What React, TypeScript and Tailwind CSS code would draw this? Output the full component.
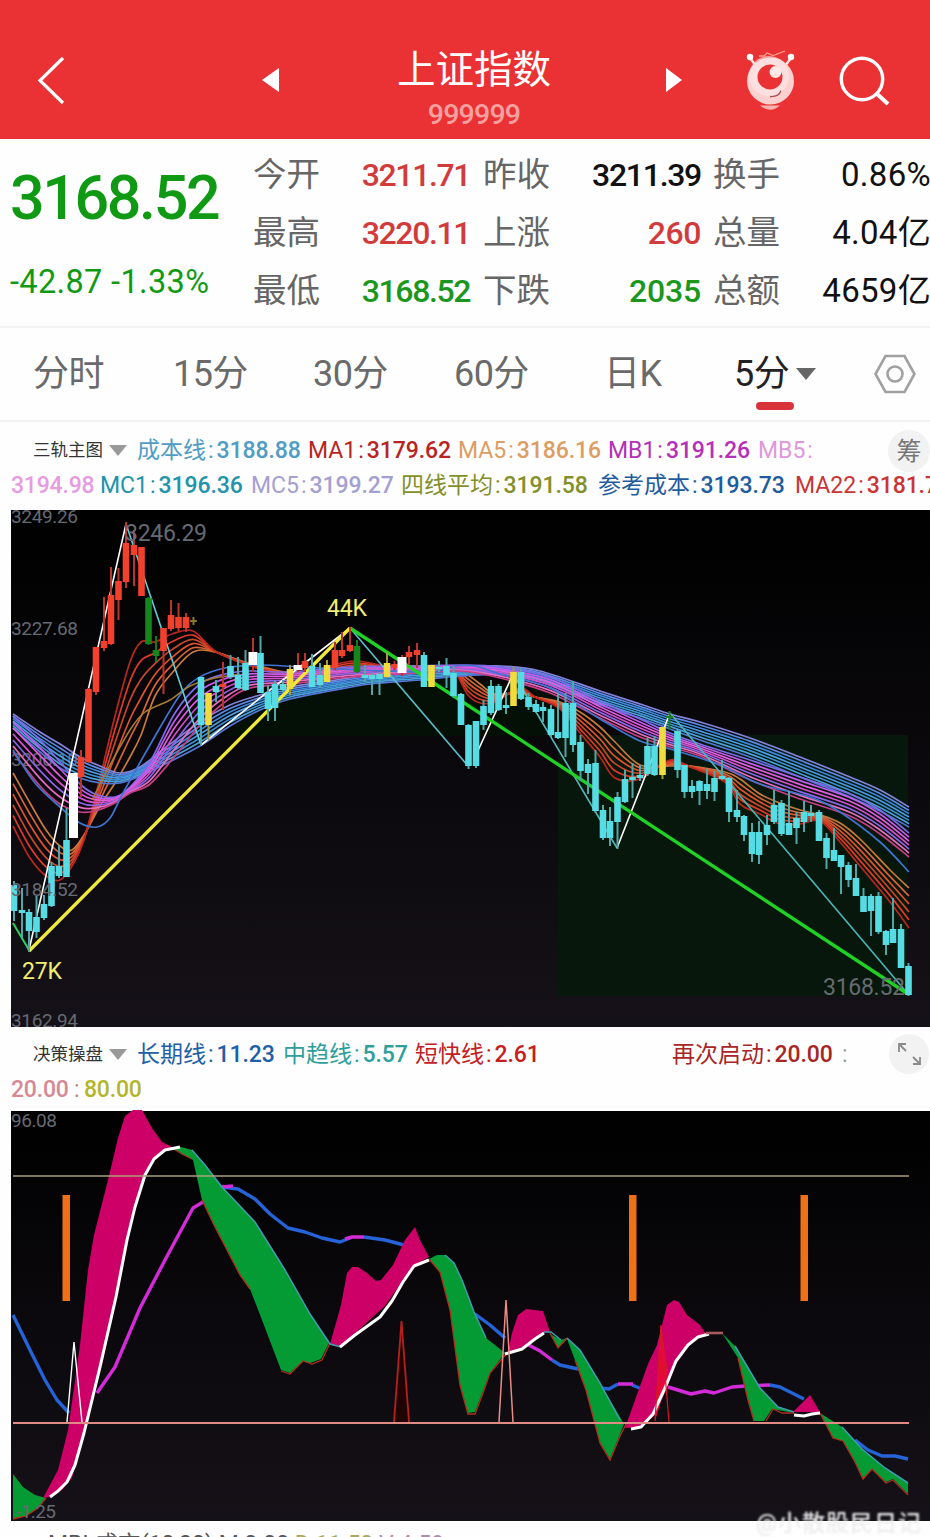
import React from "react";

type Pt = [number, number];
// x, high, low, body top, body bottom, kind
type Candle = [number, number, number, number, number, string];

const fills: Record<string, string> = {
  c: "#58dce4",
  r: "#f1402c",
  g: "#15861b",
  y: "#f0dc3c",
  w: "#ffffff",
  o: "#8a7a2c",
};
const wicks: Record<string, string> = {
  c: "#4fa8a8",
  r: "#b9342c",
  g: "#157a1d",
  y: "#a39a3a",
  w: "#b9342c",
  o: "#8a7a2c",
};

const candles: Candle[] = [
  [14, 881, 921, 885, 911, "c"],
  [22, 888, 938, 910, 913, "c"],
  [29, 909, 952, 912, 931, "c"],
  [36.5, 896, 938, 917, 932, "c"],
  [44, 895, 920, 904, 918, "c"],
  [51.5, 862, 907, 866, 906, "c"],
  [59, 845, 878, 866, 876, "c"],
  [66.5, 808, 877, 840, 877, "c"],
  [73.5, 773, 838, 773, 838, "w"],
  [81, 750, 797, 757, 777, "r"],
  [88.5, 688, 763, 689, 762, "r"],
  [96, 647, 695, 647, 692, "r"],
  [104, 597, 651, 641, 648, "r"],
  [111, 567, 645, 595, 644, "r"],
  [118.5, 568, 620, 581, 600, "r"],
  [126, 522, 588, 543, 582, "r"],
  [134, 530, 586, 545, 555, "r"],
  [141.5, 547, 596, 547, 596, "r"],
  [148.5, 597, 645, 598, 644, "g"],
  [156, 636, 662, 650, 656, "g"],
  [163.5, 628, 694, 628, 651, "r"],
  [171, 600, 631, 615, 629, "r"],
  [178.5, 603, 631, 617, 628, "r"],
  [186, 613, 632, 617, 628, "r"],
  [193.5, 617, 625, 620, 622, "o"],
  [201, 677, 745, 677, 725, "c"],
  [208.5, 693, 740, 693, 725, "y"],
  [216, 680, 702, 686, 692, "c"],
  [223, 662, 710, 684, 687, "r"],
  [230.5, 655, 679, 666, 677, "c"],
  [238, 657, 690, 675, 688, "c"],
  [245.5, 650, 691, 663, 690, "c"],
  [253, 638, 672, 652, 665, "w"],
  [260.5, 636, 693, 653, 693, "c"],
  [268, 685, 721, 692, 709, "c"],
  [275, 681, 721, 684, 708, "c"],
  [283, 680, 692, 684, 690, "c"],
  [290, 665, 695, 669, 689, "y"],
  [298, 653, 672, 665, 670, "w"],
  [305, 653, 672, 661, 668, "r"],
  [312, 654, 687, 666, 687, "c"],
  [320, 663, 688, 675, 685, "c"],
  [327, 660, 682, 665, 682, "y"],
  [335, 642, 670, 650, 668, "r"],
  [342, 632, 658, 650, 656, "r"],
  [350, 627, 652, 645, 651, "r"],
  [357, 640, 673, 646, 672, "g"],
  [365, 665, 682, 675, 678, "c"],
  [372, 673, 695, 675, 679, "c"],
  [379.5, 672, 695, 674, 679, "c"],
  [387, 652, 678, 663, 677, "y"],
  [394.5, 661, 670, 664, 668, "r"],
  [402, 655, 676, 657, 673, "w"],
  [409, 646, 665, 652, 657, "r"],
  [417, 643, 668, 650, 655, "r"],
  [424, 652, 687, 655, 687, "c"],
  [431.5, 665, 687, 665, 687, "y"],
  [439, 661, 672, 667, 669, "c"],
  [446.5, 658, 688, 666, 675, "c"],
  [453.5, 666, 698, 673, 696, "c"],
  [461, 693, 725, 694, 725, "c"],
  [468.5, 724, 769, 725, 766, "c"],
  [476, 721, 768, 721, 766, "c"],
  [483.5, 700, 730, 706, 725, "c"],
  [491, 680, 715, 686, 713, "c"],
  [498.5, 684, 711, 686, 710, "c"],
  [506, 692, 714, 705, 708, "c"],
  [513.5, 667, 706, 672, 706, "y"],
  [521, 668, 700, 672, 699, "c"],
  [528.5, 693, 710, 697, 707, "c"],
  [536, 700, 713, 704, 712, "c"],
  [543, 702, 722, 707, 711, "c"],
  [551, 705, 737, 709, 735, "c"],
  [558, 693, 739, 732, 738, "c"],
  [565.5, 693, 757, 703, 738, "c"],
  [573, 681, 752, 703, 745, "c"],
  [580.5, 735, 781, 742, 771, "c"],
  [588, 759, 794, 764, 773, "c"],
  [595.5, 750, 813, 763, 811, "c"],
  [603, 805, 840, 810, 838, "c"],
  [610, 807, 846, 821, 838, "c"],
  [617.5, 792, 849, 797, 822, "c"],
  [625, 770, 803, 779, 802, "c"],
  [632.5, 763, 798, 777, 780, "c"],
  [640, 765, 781, 775, 778, "c"],
  [647.5, 738, 776, 746, 774, "c"],
  [654.5, 736, 776, 746, 775, "c"],
  [662.5, 727, 779, 727, 775, "y"],
  [669.5, 711, 730, 716, 718, "g"],
  [677.5, 730, 778, 731, 770, "c"],
  [684.5, 765, 798, 765, 792, "c"],
  [692, 780, 798, 786, 792, "c"],
  [699.5, 780, 805, 781, 791, "c"],
  [707, 769, 799, 784, 791, "c"],
  [714.5, 771, 801, 778, 792, "c"],
  [722, 760, 780, 776, 779, "c"],
  [729, 777, 822, 778, 812, "c"],
  [737, 790, 822, 810, 817, "c"],
  [744, 815, 841, 816, 835, "c"],
  [752, 823, 862, 832, 854, "c"],
  [759, 821, 864, 832, 855, "c"],
  [767, 815, 845, 825, 835, "c"],
  [774, 790, 824, 805, 822, "c"],
  [781.5, 800, 836, 803, 834, "c"],
  [789, 791, 835, 823, 835, "c"],
  [796.5, 812, 844, 818, 828, "c"],
  [804, 801, 832, 812, 822, "c"],
  [811, 805, 822, 813, 816, "c"],
  [819, 810, 841, 812, 841, "c"],
  [826.5, 833, 869, 838, 858, "c"],
  [834, 828, 861, 850, 861, "c"],
  [841, 855, 894, 855, 867, "c"],
  [848.5, 862, 887, 865, 880, "c"],
  [856, 864, 896, 878, 896, "c"],
  [863.5, 888, 912, 896, 912, "c"],
  [871, 894, 936, 896, 911, "c"],
  [878.5, 892, 934, 896, 932, "c"],
  [886, 930, 955, 931, 945, "c"],
  [893, 898, 943, 929, 943, "c"],
  [901, 924, 968, 929, 968, "c"],
  [908.5, 963, 996, 966, 995, "c"],
];

// Each band: x, y of the slowest line, y of the fastest line
type Band = { rows: [number, number, number][]; colors: string[] };

const bands: Band[] = [
  {
    rows: [
      [13, 773, 826], [30, 803, 858], [46, 830, 876], [60, 846, 880], [72, 850, 866],
      [84, 835, 840], [100, 806, 778], [115, 783, 716], [130, 757, 662], [141, 735, 642],
      [155, 696, 642], [172, 673, 634], [193, 652, 631], [215, 652, 651], [245, 662, 664],
      [285, 672, 675], [320, 674, 669], [355, 671, 661], [400, 666, 669], [440, 667, 669],
      [455, 669, 673], [468, 675, 695], [480, 684, 703], [495, 694, 702], [520, 693, 688],
      [535, 697, 697], [560, 702, 709], [580, 712, 733], [600, 727, 757], [615, 742, 778],
      [640, 765, 779], [670, 766, 760], [690, 766, 767], [725, 772, 782], [740, 779, 804],
      [760, 794, 814], [780, 803, 824], [800, 810, 824], [820, 815, 821], [840, 823, 842],
      [860, 839, 866], [890, 870, 902], [909, 888, 928],
    ],
    colors: ["#c87a3c", "#d8643a", "#e0532e", "#c8482a", "#e23a28", "#b8281e"],
  },
  {
    rows: [
      [13, 714, 728], [40, 732, 752], [60, 744, 768], [80, 757, 778], [100, 766, 783],
      [120, 773, 783], [140, 767, 776], [165, 748, 764], [200, 722, 746], [230, 705, 726],
      [260, 695, 710], [290, 687, 699], [330, 681, 691], [370, 675, 684], [420, 670, 680],
      [460, 668, 676], [500, 666, 675], [540, 671, 682], [600, 691, 705], [640, 704, 718],
      [670, 714, 729], [700, 722, 740], [750, 738, 757], [800, 757, 777], [850, 777, 797],
      [880, 790, 811], [909, 807, 827],
    ],
    colors: ["#8483dc", "#5b8ae6", "#3a86d8", "#4a9be0", "#3b8fd0", "#4aa0d8", "#5577d8"],
  },
  {
    rows: [
      [13, 716, 752], [40, 740, 786], [60, 762, 804], [80, 784, 812], [95, 794, 811],
      [115, 797, 803], [130, 787, 793], [150, 762, 784], [175, 713, 756], [200, 684, 725],
      [225, 674, 702], [250, 671, 688], [290, 672, 684], [350, 667, 677], [420, 666, 673],
      [460, 665, 671], [500, 667, 678], [550, 677, 693], [600, 701, 718], [640, 719, 737],
      [670, 733, 747], [700, 744, 756], [750, 760, 780], [800, 777, 799], [850, 794, 816],
      [880, 810, 834], [909, 833, 857],
    ],
    colors: ["#7e6bea", "#c45aee", "#e05ce0", "#d44fd0", "#8b63e8", "#e86cc0", "#c83f88"],
  },
];

const smooth = (pts: Pt[]) => {
  let d = `M${pts[0][0]} ${pts[0][1]}`;
  for (let i = 0; i < pts.length - 1; i++) {
    const a = pts[i - 1] ?? pts[i];
    const b = pts[i];
    const c = pts[i + 1];
    const e = pts[i + 2] ?? c;
    d += `C${b[0] + (c[0] - a[0]) / 6} ${b[1] + (c[1] - a[1]) / 6} ${
      c[0] - (e[0] - b[0]) / 6
    } ${c[1] - (e[1] - b[1]) / 6} ${c[0]} ${c[1]}`;
  }
  return d;
};

const Header = () => (
  <header className="h-[139px] bg-[#ea3234] flex items-start overflow-hidden">
    <svg width="32" height="52" className="ml-[35px] mt-[54px]" fill="none">
      <path d="M28 4 L5 26.500 L28 49" stroke="#fff" strokeWidth="3.200" />
    </svg>
    <svg width="18" height="26" className="ml-[195px] mt-[67px]">
      <path d="M17 1 V25 L0 13 Z" fill="#fff" />
    </svg>
    <div className="ml-[94px] w-[200px] pt-[47px] flex flex-col items-center">
      <h1 className="text-[38.5px] leading-[46px] font-normal text-white whitespace-nowrap">
        上证指数
      </h1>
      <p className="mt-[6px] text-[28.5px] leading-8 font-medium tracking-[-0.8px] text-[#f7a09f]">
        999999
      </p>
    </div>
    <svg width="18" height="26" className="ml-[91px] mt-[67px]">
      <path d="M1 1 V25 L17 13 Z" fill="#fff" />
    </svg>
    <svg width="52" height="62" viewBox="744 49 52 62" className="ml-[61px] mt-[49px]">
      <path d="M756 66L750 58M785 66L791 58" stroke="#fde4e2" strokeWidth="2.400" />
      <circle cx="750" cy="57" r="3.200" fill="#fff" />
      <circle cx="791" cy="57" r="3.200" fill="#fff" />
      <path d="M759 56L764 56L767 53L773 55.500L785 51" fill="none" stroke="#f9a08c" strokeWidth="1.300" />
      <circle cx="770.500" cy="81" r="23.500" fill="#fbd0cf" />
      <circle cx="769" cy="76" r="20" fill="#fdebea" opacity=".6" />
      <circle cx="770" cy="77" r="12.500" fill="#ea3234" />
      <circle cx="775.500" cy="72" r="6" fill="#fde8e6" />
      <path d="M770 96.500Q779 97 781 90.500" fill="none" stroke="#a8505a" strokeWidth="1.300" />
      <path d="M760 105.500H780Q770 114 760 105.500Z" fill="#f6b3b0" />
    </svg>
    <svg width="54" height="54" viewBox="836 53 54 54" className="ml-[40px] mt-[53px]" fill="none">
      <circle cx="862" cy="79" r="20.700" stroke="#fff" strokeWidth="3.400" />
      <path d="M876 93L888 104" stroke="#fff" strokeWidth="4" />
    </svg>
  </header>
);

const stats = [
  ["今开", "3211.71", "text-[#d23b3b]", "昨收", "3211.39", "text-[#111] tracking-[-1.3px]", "换手", "0.86%"],
  ["最高", "3220.11", "text-[#d23b3b]", "上涨", "260", "text-[#d23b3b] tracking-[-0.4px]", "总量", "4.04亿"],
  ["最低", "3168.52", "text-[#1a971c]", "下跌", "2035", "text-[#1a971c] tracking-[-0.2px]", "总额", "4659亿"],
];

const Label = ({ text }: { text: string }) => (
  <span className="w-[68px] text-[33.5px] tracking-normal text-[#666]">{text}</span>
);

const Stats = () => (
  <section className="h-[189px] flex overflow-hidden border-b-2 border-[#f3f3f3] whitespace-nowrap">
    <div className="w-[253px] shrink-0 pl-[10px] text-[#109a14]">
      <div className="mt-[23px] text-[61px] leading-[72px] font-medium tracking-[-2.4px]">
        3168.52
      </div>
      <div className="mt-[28px] text-[32.5px] leading-10 tracking-[0.35px]">
        -42.87 -1.33%
      </div>
    </div>
    <div className="w-[690px] shrink-0 pt-[7px]">
      {stats.map((s) => (
        <div key={s[0]} className="h-[58px] flex items-center text-[32px]">
          <Label text={s[0]} />
          <span className={`w-[149px] text-right font-medium tracking-[-1.4px] ${s[2]}`}>
            {s[1]}
          </span>
          <span className="w-[13px]" />
          <Label text={s[3]} />
          <span className={`w-[150px] text-right font-medium ${s[5]}`}>{s[4]}</span>
          <span className="w-[12px]" />
          <Label text={s[6]} />
          <span className="w-[150px] text-right text-[33px] tracking-[0.3px] text-[#111]">
            {s[7]}
          </span>
        </div>
      ))}
    </div>
  </section>
);

const Tabs = () => (
  <nav className="h-[94px] flex items-center border-b-2 border-[#f3f3f3] text-[36px] tracking-[-0.6px] text-[#6a6a6a] whitespace-nowrap">
    <span className="ml-[33px] w-[140px]">分时</span>
    <span className="w-[140px]">15分</span>
    <span className="w-[141px]">30分</span>
    <span className="w-[150px]">60分</span>
    <span className="w-[130px]">日K</span>
    <span className="relative w-[62px] text-[#222]">
      5分
      <i className="absolute left-[22px] top-[55px] w-[38px] h-[8px] rounded-full bg-[#d9333a]" />
    </span>
    <svg width="20" height="12">
      <path d="M0 0H20L10 12Z" fill="#666" />
    </svg>
    <svg width="44" height="42" viewBox="0 0 44 42" className="ml-[57px]" fill="none" stroke="#a0a0a0" strokeWidth="2.600">
      <path d="M12.500 3H31.500L41.500 21L31.500 39H12.500L2.500 21Z" />
      <circle cx="22" cy="21" r="7.500" />
    </svg>
  </nav>
);

const Caret = () => (
  <svg width="18" height="11" className="shrink-0">
    <path d="M0 0H18L9 11Z" fill="#999" />
  </svg>
);

const Item = ({ name, value, className }: { name: string; value?: string; className: string }) => (
  <span className={`shrink-0 flex ${className}`}>
    <span>{name}</span>
    <span className="ml-[2px]">:</span>
    <span className="ml-[3px] font-medium tracking-[-0.1px]">{value}</span>
  </span>
);

const MainLegend = () => (
  <div className="h-[88px] pt-[11px] text-[23px] leading-[35px] whitespace-nowrap overflow-hidden">
    <div className="h-[35px] flex items-center pl-[33px]">
      <span className="w-[76px] text-[17.5px] text-[#333]">三轨主图</span>
      <Caret />
      <Item name="成本线" value="3188.88" className="ml-[10px] w-[171px] text-[#4f9cc4]" />
      <Item name="MA1" value="3179.62" className="w-[150px] text-[#b8241f]" />
      <Item name="MA5" value="3186.16" className="w-[150px] text-[#dd9d62]" />
      <Item name="MB1" value="3191.26" className="w-[150px] text-[#b530b8]" />
      <Item name="MB5" className="w-[130px] text-[#df98dc]" />
      <span className="w-[42px] h-[42px] rounded-full bg-[#f2f2f2] text-[#777] text-[25px] leading-[43px] text-center shrink-0">
        筹
      </span>
    </div>
    <div className="h-[35px] flex pl-[11px]">
      <span className="w-[89px] shrink-0 font-medium tracking-[-0.2px] text-[#e79be0]">3194.98</span>
      <Item name="MC1" value="3196.36" className="w-[151px] text-[#2193ab]" />
      <Item name="MC5" value="3199.27" className="w-[150px] text-[#a5a0d2]" />
      <Item name="四线平均" value="3191.58" className="w-[197px] text-[#83902a]" />
      <Item name="参考成本" value="3193.73" className="w-[197px] text-[#1f5c9e]" />
      <Item name="MA22" value="3181.79" className="text-[#cb3434]" />
    </div>
  </div>
);

const axis = "#666a72";

const MainChart = () => (
  <svg
    width="919"
    height="517"
    viewBox="11 510 919 517"
    className="block ml-[11px]"
    fill="none"
  >
    <defs>
      <linearGradient id="night" x1="0" y1="0" x2="0" y2="1">
        <stop offset="0" stopColor="#000" />
        <stop offset="1" stopColor="#151118" />
      </linearGradient>
    </defs>
    <rect x="11" y="510" width="919" height="517" fill="url(#night)" />
    <path d="M225 736L250 710L290 698L370 684L450 678L558 690V736Z" fill="#041006" />
    <rect x="558" y="735" width="350" height="261" fill="#07170b" />
    <g fontSize="19" fill={axis} fontFamily="Roboto">
      <text x="11" y="523" textLength="67">3249.26</text>
      <text x="11" y="635" textLength="67">3227.68</text>
      <text x="11" y="766" textLength="67">3206.10</text>
    </g>
    {bands.map((b, n) =>
      b.colors.map((color, i) => {
        const t = i / (b.colors.length - 1);
        return (
          <path
            key={`${n}-${i}`}
            d={smooth(b.rows.map((r) => [r[0], r[1] + (r[2] - r[1]) * t]))}
            stroke={color}
            strokeWidth="1.700"
          />
        );
      })
    )}
    <path
      d={smooth([[13, 750], [35, 783], [60, 807], [80, 823], [97, 827], [110, 818], [122, 795], [150, 745], [180, 695], [200, 677], [225, 668], [260, 665], [300, 667], [360, 670], [430, 672], [455, 666], [475, 666], [500, 674], [550, 688], [600, 719], [640, 741], [670, 749], [720, 765], [760, 784], [810, 797], [840, 812], [880, 842], [909, 872]])}
      stroke="#3f74d0"
      strokeWidth="1.700"
    />
    <path
      d={smooth([[92, 800], [110, 765], [130, 730], [145, 712], [170, 700], [190, 686], [215, 678], [240, 674]])}
      stroke="#a87c34"
      strokeWidth="1.500"
    />
    <path d="M29 950L126 524" stroke="#fff" strokeWidth="1.600" />
    <path d="M126 524L201 745" stroke="#5cd0dc" strokeWidth="1.600" />
    <path d="M201 745L270 690L350 628" stroke="#fff" strokeWidth="1.600" />
    <path d="M350 628L468 766" stroke="#5cc0cc" strokeWidth="1.600" />
    <path d="M476 755L514 672" stroke="#fff" strokeWidth="1.600" />
    <path d="M514 675L617 848" stroke="#58b8bc" strokeWidth="1.600" />
    <path d="M617 848L670 713" stroke="#fff" strokeWidth="1.600" />
    <path d="M670 713L735 790L908 994" stroke="#4ab4b8" strokeWidth="1.600" />
    <path d="M13 923L29 950" stroke="#2ad060" strokeWidth="2" />
    <path d="M29 951L350 628" stroke="#f0ea3c" strokeWidth="3.300" />
    <path d="M350 628L908 994" stroke="#1fd326" strokeWidth="3.300" />
    {candles.map(([x, hi, lo, top, bottom, kind]) => (
      <g key={x}>
        <rect x={x - 1} y={hi} width="2" height={lo - hi} fill={wicks[kind]} />
        <rect
          x={x - (kind === "w" ? 4.5 : 3.3)}
          y={top}
          width={kind === "w" ? 9 : 6.6}
          height={bottom - top}
          fill={fills[kind]}
        />
      </g>
    ))}
    <g fill={axis} fontFamily="Roboto">
      <text x="11" y="896" fontSize="19" textLength="67">3184.52</text>
      <text x="11" y="1027" fontSize="19" textLength="67">3162.94</text>
      <text x="125" y="541" fontSize="23" textLength="82">3246.29</text>
      <text x="823" y="995" fontSize="23" textLength="82">3168.52</text>
    </g>
    <g fill="#f2ee70" fontFamily="Roboto" fontSize="23">
      <text x="22" y="979" textLength="40">27K</text>
      <text x="327" y="616" textLength="40">44K</text>
    </g>
  </svg>
);

const SubLegend = () => (
  <div className="h-[83px] pt-[10px] text-[23px] leading-[35px] whitespace-nowrap overflow-hidden">
    <div className="h-[35px] flex items-center pl-[33px]">
      <span className="w-[76px] text-[17.5px] text-[#333]">决策操盘</span>
      <Caret />
      <Item name="长期线" value="11.23" className="ml-[10px] w-[146px] text-[#1f5fa6]" />
      <Item name="中趋线" value="5.57" className="w-[132px] text-[#2f9f9c]" />
      <Item name="短快线" value="2.61" className="w-[257px] text-[#c3201f]" />
      <Item name="再次启动" value="20.00" className="w-[170px] text-[#a82626]" />
      <span className="w-[46px] text-[#999]">:</span>
      <svg width="42" height="42" className="shrink-0" fill="none" stroke="#8a8a8a" strokeWidth="1.800">
        <circle cx="21" cy="20" r="20" fill="#f2f2f2" stroke="none" />
        <path d="M11 18V10H18M11 10L18 17M32 23V30H25M32 30L25 23" />
      </svg>
    </div>
    <div className="h-[35px] flex pl-[11px] text-[#d48a94]">
      <span className="w-[63px] font-medium tracking-[-0.2px]">20.00</span>
      <span className="w-[10px] text-[#b08a6a]">:</span>
      <span className="font-medium tracking-[-0.2px] text-[#b3b52c]">80.00</span>
    </div>
  </div>
);

const SubChart = () => (
  <svg
    width="919"
    height="411"
    viewBox="11 1110 919 411"
    className="block ml-[11px]"
    fill="none"
  >
    <rect x="11" y="1111" width="919" height="410" fill="url(#night)" />
    <g fill="#f07018">
      <rect x="62.500" y="1195" width="7.500" height="106" />
      <rect x="629" y="1195" width="7.500" height="106" />
      <rect x="800.500" y="1195" width="7.500" height="106" />
    </g>
    {/* long line, colour follows its direction */}
    <g strokeWidth="3.400" strokeLinejoin="round">
      <path d="M13 1315L30 1350L45 1380L57 1400L69 1413M222 1187L238 1189L255 1199L270 1214L288 1228L305 1232L322 1238L340 1242L350 1238M364 1237L385 1240L404 1245M475 1314L490 1325L505 1338M552 1360L560 1365L578 1369M600 1388L609 1389L618 1384M632 1385L642 1389M770 1385L780 1387L804 1399M855 1440L868 1450L882 1456L895 1456L908 1459" stroke="#2563d8" />
      <path d="M97 1393L115 1367L140 1308L165 1260L193 1208L203 1202M222 1187L233 1186M345 1239L352 1237L364 1237M525 1343L540 1351L552 1360M618 1384L633 1384M668 1387L691 1394L705 1391L714 1393L732 1387L745 1386L770 1385" stroke="#d32bd8" />
    </g>
    <g fill="#049a34">
      <path d="M13 1474L23 1487L35 1495L46 1498L38 1508L26 1516L13 1519Z" />
      <path d="M172 1148L181 1147L192 1150L205 1165L222 1187L255 1222L285 1270L310 1314L329 1343L321 1359L310 1363L303 1361L290 1373L281 1370L262 1320L250 1289L240 1275L214 1225L202 1200L193 1160L182 1154Z" />
      <path d="M429 1259L437 1255L445 1255L454 1263L462 1280L474 1312L486 1338L505 1353L490 1373L483 1391L475 1412L468 1413L460 1385L450 1310L440 1272Z" />
      <path d="M550 1334L561 1340L567 1338L580 1350L600 1383L624 1424L610 1459L600 1443L586 1390L575 1360L567 1339L558 1348Z" />
      <path d="M722 1333L735 1346L745 1363L760 1388L778 1407L794 1413L772 1409L764 1421L754 1421L748 1400L738 1358Z" />
      <path d="M820 1413L842 1427L862 1449L885 1468L908 1483V1494L893 1479L886 1482L872 1469L863 1479L855 1462L843 1441L833 1438Z" />
    </g>
    <g fill="#cc0066">
      <path d="M43 1498L58 1470L68 1430L80 1345L88 1270L94 1235L108 1180L118 1138L125 1116L133 1110H142L152 1128L162 1142L174 1148C150 1152 144 1175 134 1212L120 1282L102 1365L86 1425L72 1478L62 1490L50 1497Z" />
      <path d="M330 1344L341 1305L347 1273L352 1267L358 1267L367 1273L376 1281L381 1280L393 1265L405 1240L415 1227L420 1240L429 1257L413 1266L385 1306L340 1347Z" />
      <path d="M508 1352L512 1333L518 1315L526 1309L543 1311L550 1332L543 1333L525 1346Z" />
      <path d="M625 1428L635 1400L648 1364L657 1345L667 1305L674 1300L679 1302L687 1315L700 1325L706 1334L690 1343L676 1364L666 1390L655 1415L642 1427Z" />
      <path d="M793 1412L810 1395L820 1412Z" />
    </g>
    <path d="M655 1421L661 1325L668 1372L664 1391Z" fill="#e60a3c" />
    <path
      d="M13 1519L26 1516L38 1508L46 1498M172 1148L182 1154L192 1159M202 1200L214 1225L240 1275L250 1289M281 1371L290 1374L303 1361L312 1364L322 1360L330 1343M429 1259L440 1272L450 1310L460 1385L468 1414H475L483 1393L490 1373L506 1354M550 1333L558 1348L567 1338M575 1360L586 1390L600 1443L610 1460L620 1436L626 1424M738 1358L748 1400L754 1421M766 1421L773 1409L782 1413L794 1413M820 1413L833 1438L843 1441L855 1462L863 1479L872 1469L886 1483L893 1480L908 1495"
      stroke="#b0301c"
      strokeWidth="1.300"
    />
    <path
      d="M192 1150L205 1165L222 1187L255 1222L285 1270L310 1314L330 1344L341 1347M445 1255L454 1263L462 1280L474 1312L486 1338M544 1332L551 1332L561 1340M567 1338L580 1350L600 1383L620 1420M735 1346L760 1388L778 1407L794 1412M842 1427L862 1449L885 1468L908 1483"
      stroke="#3f9fb0"
      strokeWidth="1.500"
    />
    <g stroke="#fff" strokeWidth="3" strokeLinejoin="round">
      <path d="M50 1497L58 1491L67 1482L75 1465L84 1433L100 1367L116 1297L127 1240L135 1207L145 1175L154 1159L165 1150L180 1147" />
      <path d="M340 1347L355 1335L380 1317L392 1301L403 1282L414 1266L429 1260" />
      <path d="M505 1354L522 1349L535 1339L544 1333" />
      <path d="M631 1429L641 1427L653 1414L665 1388L676 1361L688 1345L698 1337L709 1334" />
      <path d="M794 1415L804 1416L812 1414L820 1413" />
    </g>
    <path d="M706 1333H723" stroke="#a85a62" strokeWidth="2.600" />
    <path d="M67 1422L74 1342L82 1422" stroke="#fff" strokeWidth="1.400" />
    <path d="M394 1422L401.500 1321L409 1422" stroke="#b8201c" strokeWidth="1.800" fill="#200404" />
    <path d="M499 1422L506 1300L513 1422" stroke="#ea8c84" strokeWidth="1.500" />
    <path d="M655 1421L661 1325L669 1422" stroke="#d01c20" strokeWidth="1.200" />
    <path d="M13 1176H909" stroke="#a9a277" strokeWidth="1.700" />
    <path d="M13 1423H909" stroke="#e08c84" strokeWidth="1.800" />
    <g fontSize="19" fill={axis} fontFamily="Roboto">
      <text x="11" y="1127" textLength="46">96.08</text>
      <text x="16" y="1518" textLength="40">-1.25</text>
    </g>
  </svg>
);

const Footer = () => (
  <div className="relative h-[16px]">
    <div className="h-[16px] overflow-hidden pl-[48px] pt-[10px] text-[23px] leading-[27px] whitespace-nowrap text-[#555]">
      MBL成交(10,20) <span className="text-[#556]">M:0.00</span>{" "}
      <span className="text-[#a9a860]">D:11.50</span>{" "}
      <span className="text-[#b08ab0]">V:4.59</span>
    </div>
    <span className="absolute right-[8px] top-[-9px] text-[23px] leading-[24px] tracking-[1px] font-medium text-[#ededed] blur-[1.2px] whitespace-nowrap">
      @小散股民日记
    </span>
  </div>
);

const App = () => {
  return (
    <main className="w-[930px] h-[1537px] overflow-hidden bg-[#fefefe] font-[Roboto,'Noto_Sans_CJK_SC',sans-serif]">
      <Header />
      <Stats />
      <Tabs />
      <MainLegend />
      <MainChart />
      <SubLegend />
      <SubChart />
      <Footer />
    </main>
  );
};

export default App;
